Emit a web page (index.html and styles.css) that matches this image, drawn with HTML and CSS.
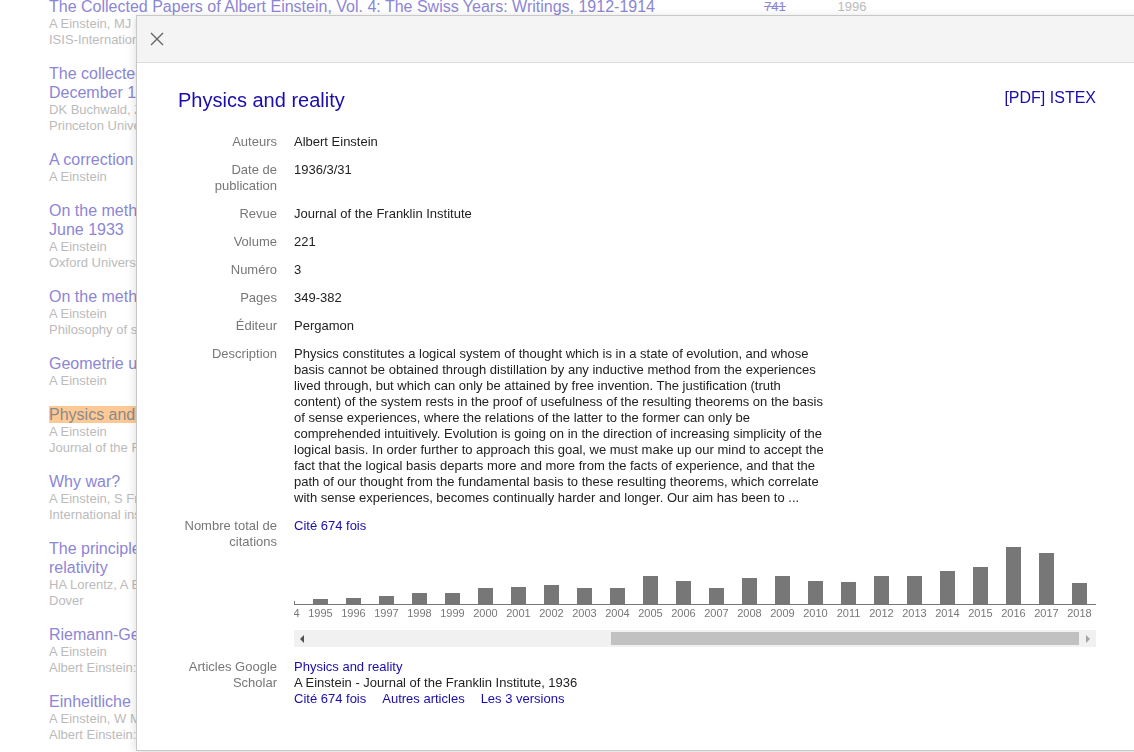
FILE: index.html
```html
<!DOCTYPE html>
<html lang="fr">
<head>
<meta charset="utf-8">
<title>Physics and reality</title>
<link rel="stylesheet" href="styles.css">
</head>
<body>
<div class="results">
  <div class="row">
    <div class="cell-title">
      <a class="t">The Collected Papers of Albert Einstein, Vol. 4: The Swiss Years: Writings, 1912-1914</a>
      <div class="g">A Einstein, MJ Klein, A Kox, J Renn, R Schulmann</div>
      <div class="g">ISIS-International Review Devoted to the History of Science and its Cultural Influences</div>
    </div>
    <div class="cell-cite"><span class="strike">741</span></div>
    <div class="cell-year">1996</div>
  </div>
  <div class="row">
    <div class="cell-title">
      <a class="t">The collected papers of Albert Einstein, Volume 12: The Berlin Years: Correspondence, January-<br>December 1921</a>
      <div class="g">DK Buchwald, Z Rosenkranz, T Sauer, J Illy, VI Holmes</div>
      <div class="g">Princeton University Press</div>
    </div>
  </div>
  <div class="row">
    <div class="cell-title">
      <a class="t">A correction of my paper: The Foundation of General Relativity</a>
      <div class="g">A Einstein</div>
    </div>
  </div>
  <div class="row">
    <div class="cell-title">
      <a class="t">On the method of theoretical physics: the Herbert Spencer lecture, delivered at Oxford, 10<br>June 1933</a>
      <div class="g">A Einstein</div>
      <div class="g">Oxford University Press</div>
    </div>
  </div>
  <div class="row">
    <div class="cell-title">
      <a class="t">On the method of theoretical physics</a>
      <div class="g">A Einstein</div>
      <div class="g">Philosophy of science 1 (2), 163-169</div>
    </div>
  </div>
  <div class="row">
    <div class="cell-title">
      <a class="t">Geometrie und Erfahrung</a>
      <div class="g">A Einstein</div>
    </div>
  </div>
  <div class="row">
    <div class="cell-title">
      <a class="t"><span class="hl">Physics and reality</span></a>
      <div class="g">A Einstein</div>
      <div class="g">Journal of the Franklin Institute 221 (3), 349-382</div>
    </div>
  </div>
  <div class="row">
    <div class="cell-title">
      <a class="t">Why war?</a>
      <div class="g">A Einstein, S Freud</div>
      <div class="g">International institute of intellectual co-operation, League of Nations</div>
    </div>
  </div>
  <div class="row">
    <div class="cell-title">
      <a class="t">The principle of relativity: a collection of original memoirs on the special and general theory of<br>relativity</a>
      <div class="g">HA Lorentz, A Einstein, H Minkowski, H Weyl, A Sommerfeld</div>
      <div class="g">Dover</div>
    </div>
  </div>
  <div class="row">
    <div class="cell-title">
      <a class="t">Riemann-Geometrie mit Aufrechterhaltung des Begriffes des Fernparallelismus</a>
      <div class="g">A Einstein</div>
      <div class="g">Albert Einstein: Akademie-Vorträge: Sitzungsberichte der Preußischen Akademie</div>
    </div>
  </div>
  <div class="row">
    <div class="cell-title">
      <a class="t">Einheitliche Feldtheorie von Gravitation und Elektrizität</a>
      <div class="g">A Einstein, W Mayer</div>
      <div class="g">Albert Einstein: Akademie-Vorträge: Sitzungsberichte der Preußischen Akademie</div>
    </div>
  </div>
</div>

<div class="modal">
  <div class="modal-head">
    <a class="close" aria-label="Fermer">
      <svg width="14" height="14" viewBox="0 0 14 14"><path d="M1 1L13 13M13 1L1 13" stroke="#666" stroke-width="1.4" fill="none"/></svg>
    </a>
  </div>
  <div class="modal-body">
    <div class="title-row">
      <a class="title">Physics and reality</a>
      <a class="pdf">[PDF] ISTEX</a>
    </div>
    <div class="field"><div class="label">Auteurs</div><div class="value">Albert Einstein</div></div>
    <div class="field"><div class="label">Date de publication</div><div class="value">1936/3/31</div></div>
    <div class="field"><div class="label">Revue</div><div class="value">Journal of the Franklin Institute</div></div>
    <div class="field"><div class="label">Volume</div><div class="value">221</div></div>
    <div class="field"><div class="label">Numéro</div><div class="value">3</div></div>
    <div class="field"><div class="label">Pages</div><div class="value">349-382</div></div>
    <div class="field"><div class="label">Éditeur</div><div class="value">Pergamon</div></div>
    <div class="field"><div class="label">Description</div><div class="value"><div class="desc">Physics constitutes a logical system of thought which is in a state of evolution, and whose basis cannot be obtained through distillation by any inductive method from the experiences lived through, but which can only be attained by free invention. The justification (truth content) of the system rests in the proof of usefulness of the resulting theorems on the basis of sense experiences, where the relations of the latter to the former can only be comprehended intuitively. Evolution is going on in the direction of increasing simplicity of the logical basis. In order further to approach this goal, we must make up our mind to accept the fact that the logical basis departs more and more from the facts of experience, and that the path of our thought from the fundamental basis to these resulting theorems, which correlate with sense experiences, becomes continually harder and longer. Our aim has been to ...</div></div></div>
    <div class="field">
      <div class="label">Nombre total de citations</div>
      <div class="value">
        <a class="link">Cité 674 fois</a>
        <div class="chart">
          <div class="col"><div class="plot"><div class="bar" style="height:3px"></div></div><span class="yr">1994</span></div>
          <div class="col"><div class="plot"><div class="bar" style="height:5px"></div></div><span class="yr">1995</span></div>
          <div class="col"><div class="plot"><div class="bar" style="height:6px"></div></div><span class="yr">1996</span></div>
          <div class="col"><div class="plot"><div class="bar" style="height:8px"></div></div><span class="yr">1997</span></div>
          <div class="col"><div class="plot"><div class="bar" style="height:11px"></div></div><span class="yr">1998</span></div>
          <div class="col"><div class="plot"><div class="bar" style="height:11px"></div></div><span class="yr">1999</span></div>
          <div class="col"><div class="plot"><div class="bar" style="height:16px"></div></div><span class="yr">2000</span></div>
          <div class="col"><div class="plot"><div class="bar" style="height:17px"></div></div><span class="yr">2001</span></div>
          <div class="col"><div class="plot"><div class="bar" style="height:19px"></div></div><span class="yr">2002</span></div>
          <div class="col"><div class="plot"><div class="bar" style="height:16px"></div></div><span class="yr">2003</span></div>
          <div class="col"><div class="plot"><div class="bar" style="height:16px"></div></div><span class="yr">2004</span></div>
          <div class="col"><div class="plot"><div class="bar" style="height:28px"></div></div><span class="yr">2005</span></div>
          <div class="col"><div class="plot"><div class="bar" style="height:23px"></div></div><span class="yr">2006</span></div>
          <div class="col"><div class="plot"><div class="bar" style="height:16px"></div></div><span class="yr">2007</span></div>
          <div class="col"><div class="plot"><div class="bar" style="height:26px"></div></div><span class="yr">2008</span></div>
          <div class="col"><div class="plot"><div class="bar" style="height:28px"></div></div><span class="yr">2009</span></div>
          <div class="col"><div class="plot"><div class="bar" style="height:23px"></div></div><span class="yr">2010</span></div>
          <div class="col"><div class="plot"><div class="bar" style="height:22px"></div></div><span class="yr">2011</span></div>
          <div class="col"><div class="plot"><div class="bar" style="height:28px"></div></div><span class="yr">2012</span></div>
          <div class="col"><div class="plot"><div class="bar" style="height:28px"></div></div><span class="yr">2013</span></div>
          <div class="col"><div class="plot"><div class="bar" style="height:33px"></div></div><span class="yr">2014</span></div>
          <div class="col"><div class="plot"><div class="bar" style="height:37px"></div></div><span class="yr">2015</span></div>
          <div class="col"><div class="plot"><div class="bar" style="height:57px"></div></div><span class="yr">2016</span></div>
          <div class="col"><div class="plot"><div class="bar" style="height:51px"></div></div><span class="yr">2017</span></div>
          <div class="col"><div class="plot"><div class="bar" style="height:21px"></div></div><span class="yr">2018</span></div>
        </div>
        <div class="scroll">
          <div class="sb-btn"><svg width="5" height="8" viewBox="0 0 5 8"><polygon points="4,0 4,8 0,4" fill="#505050"/></svg></div>
          <div class="thumb"></div>
          <div class="sb-btn"><svg width="5" height="8" viewBox="0 0 5 8"><polygon points="1,0 1,8 5,4" fill="#a3a3a3"/></svg></div>
        </div>
      </div>
    </div>
    <div class="field">
      <div class="label">Articles Google Scholar</div>
      <div class="value">
        <div><a class="link">Physics and reality</a></div>
        <div>A Einstein - Journal of the Franklin Institute, 1936</div>
        <div class="links"><a class="link">Cité 674 fois</a><a class="link">Autres articles</a><a class="link">Les 3 versions</a></div>
      </div>
    </div>
  </div>
</div>
</body>
</html>
```

FILE: styles.css
```css
html, body {
  margin: 0;
  height: 100%;
  overflow: hidden;
}
body {
  font-family: "Liberation Sans", Arial, sans-serif;
  background: #fff;
}

/* background list */
.results {
  display: flex;
  flex-direction: column;
  gap: 16px;
  margin-top: -3px;
  padding-left: 49px;
}
.row {
  display: flex;
}
.cell-title {
  width: 686px;
  flex-shrink: 0;
}
.t {
  display: block;
  font-size: 16px;
  line-height: 19px;
  color: #8c86d5;
  white-space: nowrap;
  text-decoration: none;
}
.g {
  font-size: 13px;
  line-height: 16px;
  color: #bbb;
  white-space: nowrap;
}
.hl {
  background: #ffc996;
  color: #8a8a8a;
}
.cell-cite {
  width: 80px;
  text-align: center;
  font-size: 13px;
  line-height: 19px;
  color: #8c86d5;
}
.strike {
  text-decoration: line-through;
}
.cell-year {
  width: 74px;
  text-align: center;
  font-size: 13px;
  line-height: 19px;
  color: #bbb;
}

/* modal */
.modal {
  position: fixed;
  left: 136px;
  top: 15px;
  width: 1030px;
  height: 734px;
  border: 1px solid #c8c8c8;
  background: #fff;
  box-shadow: 0 2px 10px rgba(0, 0, 0, 0.15);
}
.modal-head {
  height: 46px;
  background: #f4f4f4;
  border-bottom: 1px solid #dcdcdc;
  display: flex;
  align-items: center;
  padding-left: 13px;
}
.close {
  display: flex;
  width: 14px;
  height: 14px;
}
.modal-body {
  padding: 25px 0 0 41px;
  width: 918px;
}
.title-row {
  display: flex;
  justify-content: space-between;
  align-items: flex-start;
  margin-bottom: 22px;
}
.title {
  font-size: 20px;
  line-height: 24px;
  color: #1a0dab;
}
.pdf {
  font-size: 16px;
  line-height: 19px;
  color: #1a0dab;
}
.field {
  display: flex;
  font-size: 13px;
  line-height: 16px;
  padding-bottom: 12px;
}
.label {
  width: 99px;
  padding-right: 17px;
  flex-shrink: 0;
  text-align: right;
  color: #777;
}
.value {
  flex: 1;
  min-width: 0;
  color: #222;
}
.desc {
  max-width: 534px;
}
.link {
  color: #1a0dab;
  text-decoration: none;
}
.links {
  display: flex;
  gap: 16px;
}

/* chart */
.chart {
  width: 802px;
  display: flex;
  justify-content: flex-end;
  overflow: hidden;
}
.col {
  flex: 0 0 33px;
  display: flex;
  flex-direction: column;
  align-items: center;
}
.plot {
  width: 33px;
  height: 70px;
  border-bottom: 1px solid #777;
  display: flex;
  align-items: flex-end;
  justify-content: center;
}
.bar {
  width: 15px;
  background: #777;
}
.yr {
  font-size: 11px;
  line-height: 17px;
  color: #777;
}
.scroll {
  margin-top: 8px;
  width: 802px;
  height: 17px;
  background: #f1f1f1;
  display: flex;
  align-items: center;
}
.sb-btn {
  width: 17px;
  height: 17px;
  display: flex;
  align-items: center;
  justify-content: center;
  flex-shrink: 0;
}
.thumb {
  margin-left: auto;
  width: 468px;
  height: 13px;
  background: #c1c1c1;
}
```
